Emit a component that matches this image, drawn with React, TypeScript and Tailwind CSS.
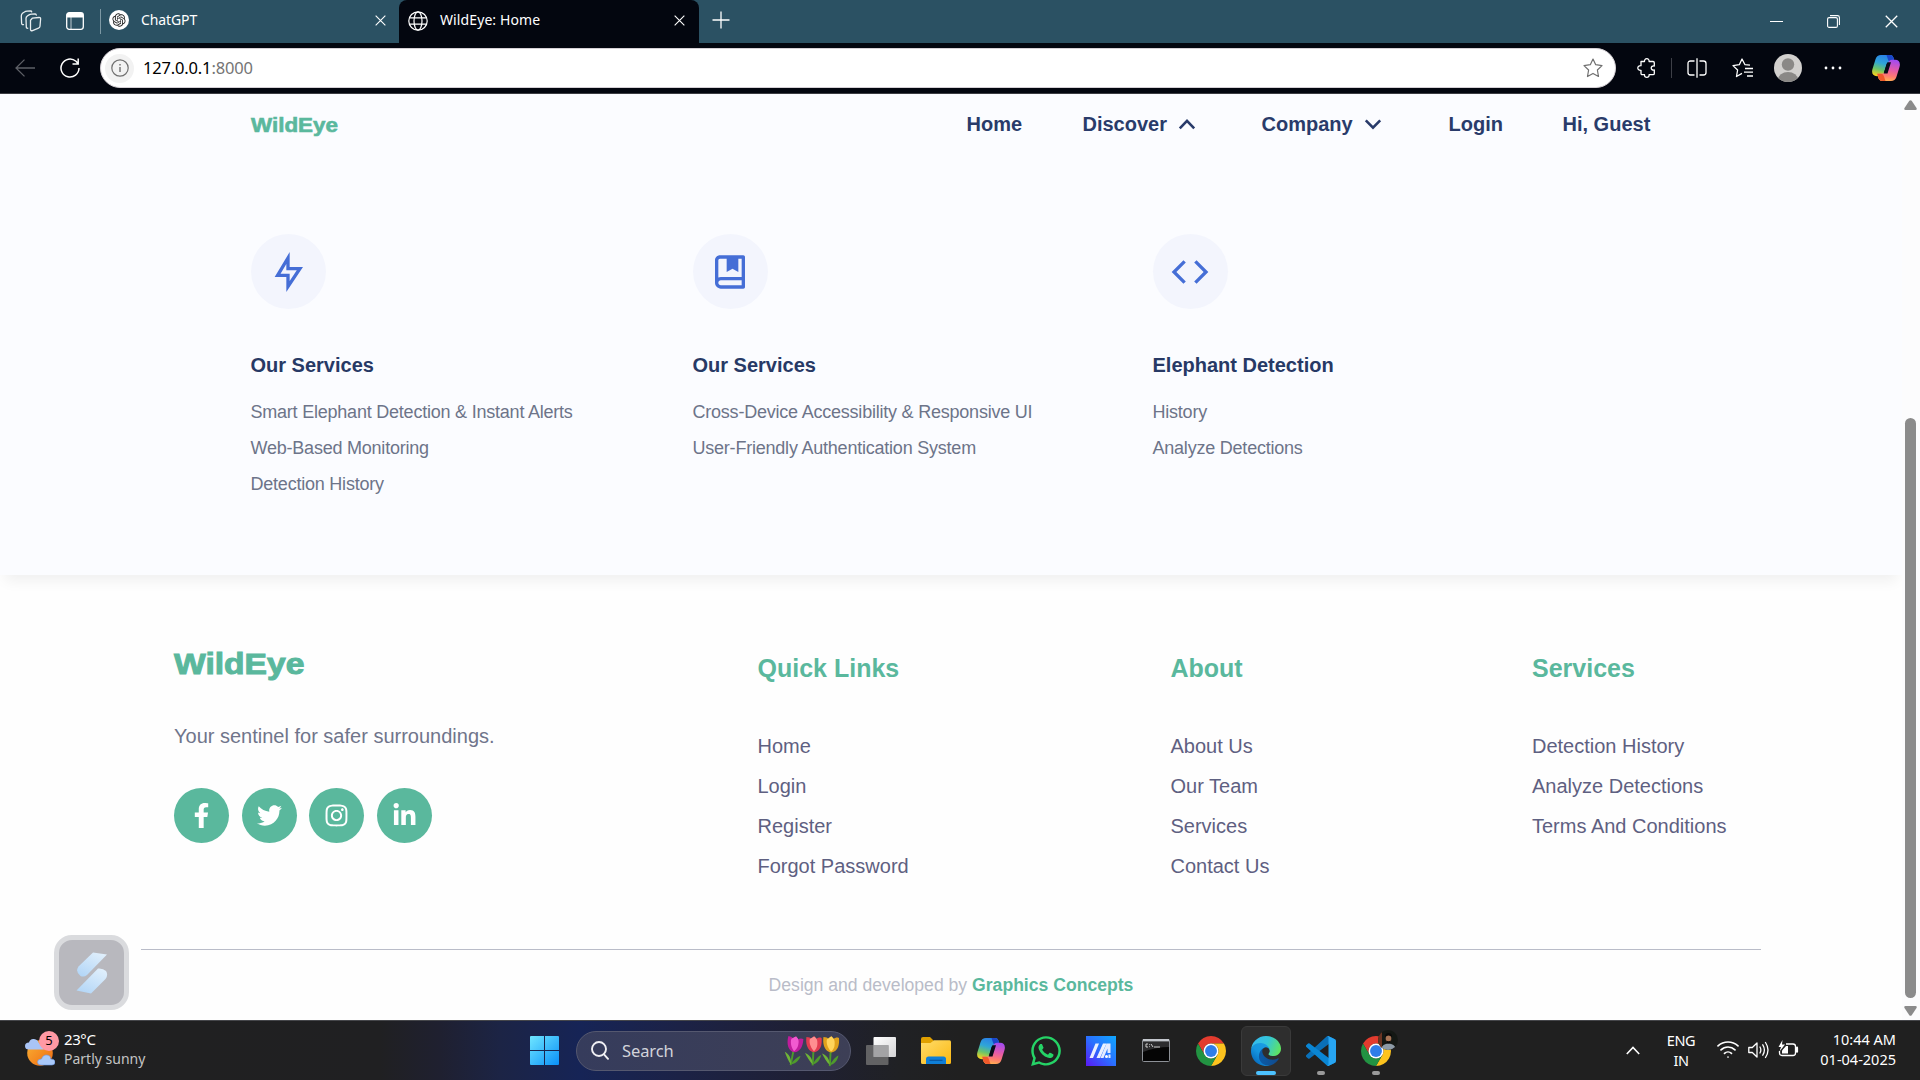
import React from "react";
import { RiFlashlightLine, RiCodeLine, RiOpenaiFill } from "react-icons/ri";
import { FaFacebookF, FaTwitter, FaInstagram, FaLinkedinIn, FaWhatsapp } from "react-icons/fa";
import { Wifi } from "lucide-react";

function BookMark({ size }: { size: number }) {
  return (
    <svg viewBox="0 0 24 24" width={size} height={size} fill="currentColor">
      <path d="M3 18.500V5C3 3.343 4.343 2 6 2H20C20.552 2 21 2.448 21 3V21C21 21.552 20.552 22 20 22H6.500C4.567 22 3 20.433 3 18.500ZM19 20V17H6.500C5.672 17 5 17.672 5 18.500C5 19.328 5.672 20 6.500 20H19ZM10 4H6C5.448 4 5 4.448 5 5V15.337C5.455 15.121 5.963 15 6.500 15H19V4H17V12L13.500 10L10 12V4Z" />
    </svg>
  );
}

function CopilotIcon({ id }: { id: string }) {
  const half =
    "M9 0H17.5C20 0 21 1.2 21.7 3.4L22.8 7.2H19C16 7.2 14.8 8.4 14 11L11.8 18C11 20.4 10 21.2 7.6 21.2H5C.8 21.2-.7 18 .5 14L3.6 4C4.5 1.2 6.2 0 9 0Z";
  return (
    <svg viewBox="0 0 28 26" className="h-[26px] w-[28px]">
      <defs>
        <linearGradient id={id + "a"} x1="0.6" y1="0" x2="0.3" y2="1">
          <stop offset="0" stopColor="#2a7fe8" />
          <stop offset="0.4" stopColor="#2fa5d8" />
          <stop offset="0.7" stopColor="#6ac46a" />
          <stop offset="1" stopColor="#f5d21f" />
        </linearGradient>
        <linearGradient id={id + "b"} x1="0.4" y1="1" x2="0.6" y2="0">
          <stop offset="0" stopColor="#a34bf0" />
          <stop offset="0.45" stopColor="#e55aa8" />
          <stop offset="0.75" stopColor="#ff7a70" />
          <stop offset="1" stopColor="#ffb152" />
        </linearGradient>
      </defs>
      <path d="M15 0h2.500C20 0 21 1.200 21.700 3.400L22.800 8H15Z" fill="#1b46c9" />
      <path d="M6 18h8l-2 8h-1.500C8 26 7 24.800 6.300 22.600Z" fill="#f0592b" />
      <path d={half} fill={`url(#${id}a)`} />
      <path d="M14.500 0H17.500C20 0 21 1.200 21.700 3.400L22.800 7.200H19C17.500 7.200 16.500 6 16 4.500Z" fill="#1b46c9" />
      <path d={half} fill={`url(#${id}b)`} transform="rotate(180 14 13)" />
      <path d="M13.500 26H10.500C8 26 7 24.800 6.300 22.600L5.200 18.800H9C10.500 18.800 11.500 20 12 21.500Z" fill="#f0592b" />
      <path d="M15.500 7.300h3.500L15.500 18.600h-3.700l2.200-7.400c.5-2 .8-3 1.500-3.900Z" fill="#0a0c18" />
    </svg>
  );
}

function ChromeIcon() {
  return (
    <svg viewBox="0 0 48 48" className="h-[30px] w-[30px]">
      <path d="M24 12H44.780A24 24 0 0 0 3.220 12L13.610 30A12 12 0 0 1 24 12Z" fill="#e33b2e" />
      <path d="M24 12H44.780A24 24 0 0 1 24 48L34.390 30A12 12 0 0 0 24 12Z" fill="#fcc31e" />
      <path d="M3.220 12A24 24 0 0 0 24 48L34.390 30A12 12 0 0 1 13.610 30Z" fill="#229342" />
      <circle cx="24" cy="24" r="12" fill="#fff" />
      <circle cx="24" cy="24" r="9.500" fill="#2f7de9" />
    </svg>
  );
}

function EdgeIcon() {
  return (
    <svg viewBox="0 0 256 256" className="h-[30px] w-[30px]">
      <defs>
        <linearGradient id="edgeA" x1="0.2" y1="0.5" x2="1" y2="0.5">
          <stop offset="0" stopColor="#0c59a4" />
          <stop offset="1" stopColor="#114a8b" />
        </linearGradient>
        <linearGradient id="edgeB" x1="0.9" y1="0.2" x2="0.3" y2="1">
          <stop offset="0" stopColor="#1b9de2" />
          <stop offset="0.5" stopColor="#1595df" />
          <stop offset="1" stopColor="#0669bd" />
        </linearGradient>
        <linearGradient id="edgeC" x1="0" y1="0.3" x2="1" y2="0.6">
          <stop offset="0" stopColor="#35b9f1" />
          <stop offset="0.5" stopColor="#34c6d8" />
          <stop offset="1" stopColor="#5fe45f" />
        </linearGradient>
      </defs>
      <path fill="url(#edgeA)" d="M231 190.500c-3.400 1.800-6.900 3.400-10.500 4.700a101.900 101.900 0 0 1-35.900 6.500c-47.300 0-88.500-32.500-88.500-74.300.1-11.400 6.400-21.900 16.400-27.300-42.800 1.800-53.800 46.400-53.800 72.500 0 73.900 68.100 81.400 82.800 81.400 7.900 0 19.800-2.300 27-4.600l1.300-.4a128.300 128.300 0 0 0 66.600-52.800 4 4 0 0 0-5.400-5.700z" />
      <path fill="url(#edgeB)" d="M105.700 241.400c-8.900-5.500-16.600-12.800-22.700-21.300-26.300-36-18.400-86.500 17.600-112.800 3.800-2.700 7.700-5.200 11.900-7.200 3.100-1.500 8.400-4.100 15.500-4a32.400 32.400 0 0 1 25.700 13c4 5.400 6.300 11.900 6.400 18.700 0-.2 24.500-79.600-80-79.600-43.900 0-80 41.700-80 78.200-.2 19.300 4 38.500 12.100 56a128 128 0 0 0 156.400 67.100c-21.100 6.300-43.800 3.500-62.900-8.100z" />
      <path fill="url(#edgeC)" d="M152.300 148.900c-.8 1.100-3.300 2.500-3.300 5.700 0 2.600 1.700 5.100 4.700 7.200 14.400 10 41.500 8.700 41.600 8.700 10.700 0 21.100-2.900 30.300-8.300A61.900 61.900 0 0 0 256 109.100c.3-22.400-8-37.300-11.300-43.900C223.400 23.300 177.700 0 128 0A128 128 0 0 0 0 126.200c.5-36.500 36.800-66 80-66 3.500 0 23.500.3 42 10.100 16.300 8.500 24.900 18.900 30.800 29.200 6.200 10.700 7.300 24.100 7.300 29.500 0 5.300-2.700 13.300-7.800 19.900z" />
    </svg>
  );
}

function VsCodeIcon() {
  return (
    <svg viewBox="0 0 100 100" className="h-[30px] w-[30px]">
      <path fill="#0a70b8" d="M96.460 10.800 75.860.88a6.230 6.230 0 0 0-7.100 1.200L1.300 63.600a4.170 4.170 0 0 0 0 6.160l5.510 5a4.170 4.170 0 0 0 5.320.24L93.360 13.400A4.130 4.130 0 0 1 100 16.700v-.24a6.250 6.250 0 0 0-3.540-5.630z" />
      <path fill="#0a86d4" d="M96.460 89.200 75.860 99.100a6.230 6.230 0 0 1-7.100-1.200L1.300 36.400a4.170 4.170 0 0 1 0-6.160l5.510-5a4.170 4.170 0 0 1 5.320-.24l81.230 61.600A4.130 4.130 0 0 0 100 83.300v.24a6.250 6.250 0 0 1-3.540 5.630z" />
      <path fill="#27a5f2" d="M75.860 99.100a6.230 6.230 0 0 1-7.100-1.200A3.670 3.670 0 0 0 75 95.300V4.700a3.670 3.670 0 0 0-6.250-2.600 6.230 6.230 0 0 1 7.100-1.200l20.600 9.900A6.250 6.250 0 0 1 100 16.400v67.200a6.250 6.250 0 0 1-3.540 5.630z" />
    </svg>
  );
}

function Tulip({ light, dark }: { light: string; dark: string }) {
  return (
    <g>
      <path d="M9 14C8.500 20 8.500 26 8 31" stroke="#4c9a2a" strokeWidth="2" fill="none" />
      <path d="M8 30C5 27 2 22 0 18C5 20 8 24 8 30Z" fill="#6fb536" />
      <path d="M8 30C10 26 14 21 17 20C16 25 13 29 8 30Z" fill="#4f9a2c" />
      <path d="M1.500 1C4 1 6 2 7 3L9.500 0L12 3C13.500 2 15 1 17.500 2C18 8 17 13 13.500 15.500C11 17.500 8 17.500 5.500 15.500C2.500 13 .5 8 1.500 1Z" fill={dark} />
      <path d="M5 3.500C7 2 8.500 1 9.500 0.500C12 2 13.500 4 13 9C13 12 11 15 9.500 16C7 14 4 8 5 3.500Z" fill={light} />
    </g>
  );
}

function Close({ className }: { className: string }) {
  return (
    <svg viewBox="0 0 12 12" className={className} fill="none" stroke="#fff" strokeWidth="1.2">
      <path d="M.7.7 11.300 11.300M11.300.7.7 11.300" />
    </svg>
  );
}

function TitleBar() {
  return (
    <div className="flex h-[43px] items-center bg-[#2b5163] font-['Noto_Sans',sans-serif] text-[14px] text-white">
      <svg viewBox="0 0 22 22" className="-mt-0.5 ml-5 h-[22px] w-[22px]" fill="none" stroke="#e8eef0" strokeWidth="1.300" strokeLinejoin="round" strokeLinecap="round">
        <path d="M10.500 10.200 12.300 8.200 19 7.500Q20.800 7.400 20.600 9L20 16.300Q19.900 17.700 18.500 18.200L12.500 20.600Q10.600 21.200 10.500 19.500Z" />
        <path d="M7.800 18.200Q6.400 18.600 6.300 17L6 8.500Q6 7 7.300 6L9 4.900Q10 4.200 11.500 4.100L15.200 4Q16.200 4 16.300 5" />
        <path d="M3.500 14.600Q1.800 15 1.600 13.200L1.300 6Q1.300 4.300 2.500 3.300L4.400 2Q5.500 1.200 7 1.100L10.500 1Q11.600 1 11.700 1.900" />
      </svg>
      <svg viewBox="0 0 18 18" className="-mt-0.5 ml-6 h-[18px] w-[18px]">
        <rect x=".7" y=".7" width="16.600" height="16.600" rx="2.500" fill="none" stroke="#fff" strokeWidth="1.300" />
        <path d="M.7 3Q.7.7 3 .7H15Q17.300.7 17.300 3V5.500H.7Z" fill="#fff" />
        <path d="M5 5v12" stroke="#fff" strokeWidth="1" strokeOpacity=".7" />
      </svg>
      <div className="ml-4 h-[25px] w-px bg-[#7d98a4]" />
      <div className="-mt-1 ml-2 grid h-5 w-5 place-items-center rounded-full bg-white text-[#222]">
        <RiOpenaiFill size={16} />
      </div>
      <div className="-mt-1 ml-3 w-[234px] tracking-[-0.1px]">ChatGPT</div>
      <Close className="-mt-0.5 h-[11px] w-[11px]" />
      <div className="ml-[13px] flex h-[43px] w-[300px] items-center rounded-t-lg bg-[#03060f]">
        <svg viewBox="0 0 20 20" className="-mt-0.5 ml-[9px] h-5 w-5" fill="none" stroke="#fff" strokeWidth="1.200">
          <circle cx="10" cy="10" r="9.200" />
          <ellipse cx="10" cy="10" rx="4" ry="9.200" />
          <path d="M1.500 6.800h17M1.500 13.200h17" />
        </svg>
        <div className="-mt-1 ml-3 w-[234px] tracking-[0.1px]">WildEye: Home</div>
        <Close className="-mt-0.5 h-[11px] w-[11px]" />
      </div>
      <svg viewBox="0 0 18 18" className="-mt-1 ml-[13px] h-[18px] w-[18px]" fill="none" stroke="#fff" strokeWidth="1.300">
        <path d="M9 .5v17M.5 9h17" />
      </svg>
      <div className="mr-[22px] ml-auto flex items-center">
        <div className="mr-[44px] h-px w-[13px] bg-white" />
        <svg viewBox="0 0 13 13" className="mr-[45px] h-[13px] w-[13px]" fill="none" stroke="#fff" strokeWidth="1.100">
          <rect x=".6" y="2.600" width="9.800" height="9.800" rx="1.500" />
          <path d="M3 .6h7.500q1.900 0 1.900 1.900V10" />
        </svg>
        <Close className="h-[13px] w-[13px]" />
      </div>
    </div>
  );
}

function Toolbar() {
  return (
    <div className="flex h-[51px] items-center border-b border-[#3b3c42] bg-[#03060f]">
      <svg viewBox="0 0 20 18" className="ml-[15px] h-[18px] w-5" fill="none" stroke="#5e6067" strokeWidth="1.300">
        <path d="M20 9H1M9.500.6 1 9l8.500 8.400" />
      </svg>
      <svg viewBox="0 0 20 20" className="ml-[25px] h-5 w-5" fill="none" stroke="#fff" strokeWidth="1.500">
        <path d="M19 10A9 9 0 1 1 16 3.300L18 5.500M18.200.5V6H12.500" />
      </svg>
      <div className="ml-5 flex h-10 w-[1516px] items-center rounded-full border border-[#d5d0d5] bg-white">
        <div className="ml-1 grid h-[29px] w-[29px] place-items-center rounded-full bg-[#f2f2f2]">
          <svg viewBox="0 0 18 18" className="h-[18px] w-[18px]" fill="none" stroke="#707070" strokeWidth="1.200">
            <circle cx="9" cy="9" r="8.200" />
            <path d="M9 8v5M9 5v1.500" strokeWidth="1.400" />
          </svg>
        </div>
        <div className="ml-[9px] font-['Noto_Sans',sans-serif] text-[16.5px] tracking-[-0.17px] text-black">
          127.0.0.1<span className="text-[#757575]">:8000</span>
        </div>
        <svg viewBox="0 0 20 20" className="mr-3 ml-auto h-5 w-5" fill="none" stroke="#707070" strokeWidth="1.200" strokeLinejoin="round">
          <path d="M10 1 12.700 6.700 19 7.600 14.400 12 15.500 18.500 10 15.400 4.500 18.500 5.600 12 1 7.600 7.300 6.700Z" />
        </svg>
      </div>
      <svg viewBox="0 0 20 20" className="ml-[21px] h-5 w-5" fill="none" stroke="#fff" strokeWidth="1.300" strokeLinejoin="round">
        <path d="M4 3.500H7.500C7.300 1.500 8.500.7 9.800.7S12.300 1.500 12.100 3.500H16Q17.300 3.500 17.300 4.800V8C15.300 7.700 14.200 8.700 14.200 10S15.300 12.300 17.300 12V15.500Q17.300 16.700 16 16.700H12.100C12.300 18.600 11.100 19.300 9.800 19.300S7.300 18.600 7.500 16.700H5.500Q4 16.700 4 15.500V12.300C2 12.500.8 11.400.8 10S2 7.500 4 7.700Z" />
      </svg>
      <div className="ml-3.5 h-5 w-px bg-[#3d3f47]" />
      <svg viewBox="0 0 20 20" className="ml-[15px] h-5 w-5" fill="none" stroke="#fff" strokeWidth="1.300">
        <path d="M10 .3v19.400M7.500 3H3.500Q1 3 1 5.500v9Q1 17 3.500 17h4M12.500 3h4Q19 3 19 5.500v9Q19 17 16.500 17h-4" />
      </svg>
      <svg viewBox="0 0 21 20" className="ml-[25px] h-5 w-[21px]" fill="none" stroke="#fff" strokeWidth="1.300" strokeLinejoin="round">
        <path d="M18 7.200 13 6.700 10 1 7.300 6.700 1 7.600 5.600 12 4.500 18.500 10 15.400M13 10.500h8M12 14.200h9M15 18h6" />
      </svg>
      <svg viewBox="0 0 28 28" className="ml-[21px] h-7 w-7">
        <defs>
          <clipPath id="profileClip"><circle cx="14" cy="14" r="14" /></clipPath>
        </defs>
        <g clipPath="url(#profileClip)">
          <rect width="28" height="28" fill="#d2d0ce" />
          <circle cx="14" cy="10.500" r="6.200" fill="#8a8886" />
          <ellipse cx="14" cy="25.500" rx="10" ry="7.500" fill="#8a8886" />
        </g>
      </svg>
      <svg viewBox="0 0 18 4" className="ml-[22px] h-1 w-[18px]" fill="#fff">
        <circle cx="2" cy="2" r="1.400" />
        <circle cx="9" cy="2" r="1.400" />
        <circle cx="16" cy="2" r="1.400" />
      </svg>
      <div className="ml-[30px]"><CopilotIcon id="cpA" /></div>
    </div>
  );
}

function Chevron({ up }: { up?: boolean }) {
  return (
    <svg viewBox="0 0 32 32" className="ml-1 h-8 w-8" fill="none" stroke="#293b6a" strokeWidth="2.600">
      <path d={up ? "M8.8 20.3 16 12.900 23.200 20.300" : "M8.800 12.300 16 19.700 23.200 12.300"} />
    </svg>
  );
}

const services = [
  { title: "Our Services", Icon: RiFlashlightLine, items: ["Smart Elephant Detection & Instant Alerts", "Web-Based Monitoring", "Detection History"] },
  { title: "Our Services", Icon: BookMark, items: ["Cross-Device Accessibility & Responsive UI", "User-Friendly Authentication System"] },
  { title: "Elephant Detection", Icon: RiCodeLine, items: ["History", "Analyze Detections"] },
];

const footerColumns = [
  { title: "Quick Links", items: ["Home", "Login", "Register", "Forgot Password"] },
  { title: "About", items: ["About Us", "Our Team", "Services", "Contact Us"] },
  { title: "Services", items: ["Detection History", "Analyze Detections", "Terms And Conditions"] },
];

const socials = [
  { Icon: FaFacebookF, size: 25 },
  { Icon: FaTwitter, size: 25 },
  { Icon: FaInstagram, size: 25 },
  { Icon: FaLinkedinIn, size: 25 },
];

function Header() {
  return (
    <header className="relative h-[481px] bg-[#fbfcff] pl-[250.5px] shadow-[0_11px_13px_-5px_rgba(0,0,0,0.06)]">
      <nav className="flex h-[60px] items-center text-[20px] font-bold text-[#293b6a]">
        <div className="mt-0.5 w-[716px]">
          <span className="inline-block origin-left scale-x-[1.12] text-[#5ab89d] [-webkit-text-stroke:0.6px_#5ab89d]">WildEye</span>
        </div>
        <div className="w-[116px]">Home</div>
        <div className="flex w-[179px] items-center">Discover<Chevron up /></div>
        <div className="flex w-[187px] items-center">Company<Chevron /></div>
        <div className="w-[114px]">Login</div>
        <div>Hi, Guest</div>
      </nav>
      <div className="grid grid-cols-[442px_460px_1fr] pt-20">
        {services.map(({ title, Icon, items }, i) => (
          <div key={i}>
            <div className="grid h-[75px] w-[75px] place-items-center rounded-full bg-[#f3f5fd] text-[#456ed6]">
              <Icon size={40} />
            </div>
            <h3 className="mt-[41px] text-[20px] leading-[30px] font-bold text-[#273965]">{title}</h3>
            <ul className="mt-3.5 text-[18px] leading-9 tracking-[-0.22px] text-[#6d7489]">
              {items.map((t) => <li key={t}>{t}</li>)}
            </ul>
          </div>
        ))}
      </div>
    </header>
  );
}

function Footer() {
  return (
    <footer className="flex flex-1 flex-col">
      <div className="grid h-[374px] grid-cols-[583.5px_413px_361.5px_1fr] pl-[174px]">
        <div className="pt-[69px]">
          <div className="w-max origin-left scale-x-[1.12] text-[30px] leading-10 font-bold text-[#5ab89d] [-webkit-text-stroke:1px_#5ab89d]">WildEye</div>
          <p className="mt-[37px] text-[20px] leading-[30px] text-[#70758b]">Your sentinel for safer surroundings.</p>
          <div className="mt-[37px] flex gap-[12.7px]">
            {socials.map(({ Icon, size }, i) => (
              <div key={i} className="grid h-[55px] w-[55px] place-items-center rounded-full bg-[#5ab89d] text-white">
                <Icon size={size} />
              </div>
            ))}
          </div>
        </div>
        {footerColumns.map((c) => (
          <div key={c.title} className="pt-[73px]">
            <h4 className="text-[25px] leading-10 font-bold text-[#5ab89d]">{c.title}</h4>
            <ul className="mt-[38px] text-[20px] leading-10 text-[#5e6081]">
              {c.items.map((t) => <li key={t}>{t}</li>)}
            </ul>
          </div>
        ))}
      </div>
      <div className="mr-[141px] ml-[141px] border-t border-[#b9bcc8] pt-5 text-center text-[17.6px] leading-[30px] text-[#b9bcc8]">
        Design and developed by <span className="font-bold text-[#5ab89d]">Graphics Concepts</span>
      </div>
    </footer>
  );
}

function FloatingWidget() {
  return (
    <div className="absolute top-[841px] left-[54px] grid h-[75px] w-[75px] place-items-center rounded-[18px] border-[5px] border-[#dadbde] bg-[#b8b8be]">
      <svg viewBox="0 0 32 42" className="h-[42px] w-8">
        <defs>
          <linearGradient id="swA" x1="0.8" y1="0" x2="0.2" y2="1">
            <stop offset="0" stopColor="#e0effc" />
            <stop offset="1" stopColor="#b3d6f7" />
          </linearGradient>
        </defs>
        <path d="M17 .5 31 2.500 11 23Q8 25.500 4.500 24Q-1 20 2.500 14.500Z" fill="url(#swA)" />
        <path d="M.5 38.500 22 16.500Q27 16 30 19Q32.500 23 29.500 27L15 41.500Z" fill="url(#swA)" />
      </svg>
    </div>
  );
}

function Scrollbar() {
  return (
    <div className="flex w-[18px] flex-col items-center bg-[#fcfcfd] pt-1.5 pr-0.5">
      <svg viewBox="0 0 13 10" className="h-2.5 w-[13px]" fill="#8b8b8b"><path d="M5.300.8Q6.500-.5 7.700.8L12.500 8Q13.300 9.800 11.500 9.900H1.500Q-.3 9.800.5 8Z" /></svg>
      <div className="mt-[308px] h-[580px] w-[11px] rounded-full bg-[#8b8b8b]" />
      <svg viewBox="0 0 13 10" className="mt-2 h-2.5 w-[13px]" fill="#8b8b8b"><path d="M5.300 9.200Q6.500 10.500 7.700 9.200L12.500 2Q13.300.2 11.500.1H1.500Q-.3.2.5 2Z" /></svg>
    </div>
  );
}

function AppCell({ children, indicator, active }: { children?: React.ReactNode; indicator?: boolean; active?: boolean }) {
  return (
    <div className={active ? "relative grid h-[50px] w-[50px] place-items-center rounded-md border border-[#3a3a3a] bg-[#2e2e2e]" : "relative grid h-[50px] w-[50px] place-items-center"}>
      {children}
      {active && <div className="absolute bottom-0 left-[14px] h-1 w-5 rounded-full bg-[#4cc2ff]" />}
      {indicator && <div className="absolute bottom-px left-[21px] h-1 w-2 rounded-full bg-[#9a9a9a]" />}
    </div>
  );
}

function Taskbar() {
  return (
    <div className="flex h-[60px] items-center border-t border-[#45464a] bg-[linear-gradient(90deg,#202020_0px,#202022_380px,#1f2030_440px,#1c2445_500px,#162456_580px,#1c2246_680px,#1f2034_800px,#202124_900px,#202020_960px)] font-['Noto_Sans',sans-serif] text-[15px] leading-5 text-white">
      <div className="-mt-1 ml-[25px] h-[36px] w-[30px]">
        <div className="relative">
          <svg viewBox="0 0 30 36" className="h-9 w-[30px]">
            <defs>
              <linearGradient id="sun" x1="0" y1="0" x2="1" y2="1">
                <stop offset="0" stopColor="#f9b234" />
                <stop offset="1" stopColor="#f06a12" />
              </linearGradient>
            </defs>
            <circle cx="15" cy="22" r="12.800" fill="url(#sun)" />
            <path d="M4 18.500Q0 18.500 0 15T4 11.500Q5 7.500 9 8T13.500 11.500L19 18.500Z" fill="#a9c4f5" />
            <path d="M16 34Q12.500 34 12.500 31T16.500 28Q18 23.500 22 24T25.500 28Q30 28 30 31T27 34Z" fill="#a9c9fa" stroke="#6d97e0" strokeWidth=".6" />
          </svg>
          <div className="absolute top-0 left-[14px] grid h-5 w-5 place-items-center rounded-full bg-[#ff99a4] text-[13px] leading-none text-black">5</div>
        </div>
      </div>
      <div className="-mt-1 ml-[9px] w-[466px]">
        <div className="tracking-[-0.4px]">23°C</div>
        <div className="text-[14px] text-[#c4c4c4]">Partly sunny</div>
      </div>
      <svg viewBox="0 0 29 29" className="h-[29px] w-[29px]">
        <defs>
          <linearGradient id="win" x1="0" y1="0" x2="1" y2="1">
            <stop offset="0" stopColor="#6fe6ff" />
            <stop offset="1" stopColor="#0a90f8" />
          </linearGradient>
        </defs>
        <path fill="url(#win)" d="M1 0H14V14H0V1Q0 0 1 0ZM15 0H28Q29 0 29 1V14H15ZM0 15H14V29H1Q0 29 0 28ZM15 15H29V28Q29 29 28 29H15Z" />
      </svg>
      <div className="ml-[17px] flex h-10 w-[275px] items-center rounded-full border border-[#55586f] bg-[linear-gradient(90deg,#363c5c,#3d3f56)]">
        <svg viewBox="0 0 18 19" className="ml-3.5 h-[19px] w-[18px]" fill="none" stroke="#f0f0f4" strokeWidth="1.900" strokeLinecap="round">
          <circle cx="8" cy="8" r="7" />
          <path d="m13 13.300 4 4.500" />
        </svg>
        <div className="ml-[13px] text-[16.5px] tracking-[-0.1px] text-[#d2d3da]">Search</div>
        <svg viewBox="0 0 60 32" className="mr-2 ml-auto h-8 w-[60px]">
          <g transform="translate(3 1) rotate(8 9 15) scale(.95)"><Tulip light="#f25ad0" dark="#c01c9c" /></g>
          <g transform="translate(23 1) scale(.95)"><Tulip light="#ff8f90" dark="#e23c50" /></g>
          <g transform="translate(40 1) scale(.97)"><Tulip light="#ffd45a" dark="#e0a11c" /></g>
        </svg>
      </div>
      <div className="ml-[5px] flex gap-[5px]">
        <AppCell>
          <svg viewBox="0 0 30 28" className="h-7 w-[30px]">
            <defs>
              <linearGradient id="tv" x1="0" y1="0" x2="1" y2="1"><stop offset="0" stopColor="#fff" /><stop offset="1" stopColor="#d4d4d6" /></linearGradient>
            </defs>
            <rect x="7.500" y="0" width="22.500" height="20" rx="1" fill="url(#tv)" />
            <rect x="0" y="8" width="22.500" height="20" rx="1" fill="#737373" fillOpacity=".8" />
            <rect x="7.500" y="8" width="15" height="12" fill="#a3a3a5" />
          </svg>
        </AppCell>
        <AppCell>
          <svg viewBox="0 0 30 27" className="h-[27px] w-[30px]">
            <defs>
              <linearGradient id="fold" x1="0" y1="0" x2="1" y2="1"><stop offset="0" stopColor="#ffdc6a" /><stop offset="1" stopColor="#fbb812" /></linearGradient>
            </defs>
            <path d="M0 2Q0 0 2 0H9L12.500 3.500V8H0Z" fill="#e0a000" />
            <path d="M0 6H9.500L13 3.300H28.500Q30 3.300 30 5V25.500Q30 27 28.500 27H1.500Q0 27 0 25.500Z" fill="url(#fold)" />
            <path d="M5 27V22Q5 19.500 7.500 19.500H22.500Q25 19.500 25 22V27Z" fill="#0f7fd8" />
            <path d="M8.500 23.300h13" stroke="#0a55a0" strokeWidth="1.200" />
          </svg>
        </AppCell>
        <AppCell><CopilotIcon id="cpB" /></AppCell>
        <AppCell><FaWhatsapp size={34} color="#25d366" /></AppCell>
        <AppCell>
          <svg viewBox="0 0 30 30" className="h-[30px] w-[30px]">
            <defs>
              <linearGradient id="ma" x1="0" y1="1" x2="1" y2="0"><stop offset="0" stopColor="#5a18f5" /><stop offset=".5" stopColor="#2a70ff" /><stop offset="1" stopColor="#0fa8ff" /></linearGradient>
            </defs>
            <rect width="30" height="30" fill="url(#ma)" />
            <path d="M9.500 7.500H13L7 22H3.500ZM17 7.500H20.500L14 22H10.500Z" fill="#fff" fillOpacity=".9" />
            <path d="M20.500 7.500H24.500V17H21.500V12.500L17.500 22H14.500Z" fill="#e4ecff" />
            <circle cx="20.500" cy="20.500" r="1.500" fill="#fff" />
            <path d="M22.500 18.500H24.500V22H22.500Z" fill="#e4ecff" />
          </svg>
        </AppCell>
        <AppCell>
          <svg viewBox="0 0 28 23" className="h-[23px] w-7">
            <rect x=".5" y=".5" width="27" height="22" rx="1" fill="#050505" stroke="#8d9197" />
            <rect x="1" y="0" width="26" height="2.500" fill="#c3c7cd" />
            <path d="M1 3H27V8Q14 8 1 13Z" fill="#2c2c2e" />
            <path d="M6 5H4V8H6M7.500 5.300v.8M7.500 7.300v.8M9 5l2 3M12 8h6" stroke="#ddd" strokeWidth=".9" fill="none" />
          </svg>
        </AppCell>
        <AppCell><ChromeIcon /></AppCell>
        <AppCell active><EdgeIcon /></AppCell>
        <AppCell indicator><VsCodeIcon /></AppCell>
        <AppCell indicator>
          <ChromeIcon />
          <svg viewBox="0 0 20 20" className="absolute top-1 left-[27px] h-5 w-5">
            <defs><clipPath id="chromeAv"><circle cx="10" cy="10" r="10" /></clipPath></defs>
            <g clipPath="url(#chromeAv)">
              <rect width="20" height="20" fill="#141814" />
              <rect width="4" height="20" fill="#6a3422" />
              <ellipse cx="10.500" cy="19" rx="7" ry="5.500" fill="#8d9aa6" />
              <ellipse cx="10.500" cy="8.500" rx="2.800" ry="4" fill="#a87455" />
              <path d="M7 7Q7 3 10.500 3T14 7Q12 5.500 10.500 5.500T7 7ZM8 10.500Q10.500 12 13 10.500Q12.500 13.500 10.500 13.500T8 10.500Z" fill="#0a0a0a" />
            </g>
          </svg>
        </AppCell>
      </div>
      <div className="mr-[24px] ml-auto flex items-center">
        <svg viewBox="0 0 14 9" className="h-[9px] w-3.5" fill="none" stroke="#fff" strokeWidth="1.600"><path d="M.8 8 7 1.500 13.200 8" /></svg>
        <div className="-mt-0.5 ml-6 w-[34px] text-center text-[14.5px] tracking-[-0.4px]">ENG<br />IN</div>
        <Wifi className="-mt-1 ml-[18px]" size={24} strokeWidth={1.7} />
        <svg viewBox="0 0 21 18" className="-mt-0.5 ml-2 h-[18px] w-[21px]" fill="none" stroke="#fff" strokeWidth="1.300" strokeLinecap="round" strokeLinejoin="round">
          <path d="M.8 6.500V11.500H4.300L9 16V2L4.300 6.500ZM12 6Q13.700 9 12 12M14.800 3.800Q18 9 14.800 14.200M17.500 1.500Q22.500 9 17.500 16.500" />
        </svg>
        <svg viewBox="0 0 21 18" className="-mt-1 ml-[9px] h-[18px] w-[21px]" fill="none" stroke="#fff" strokeWidth="1.300">
          <path d="M8 4H15Q17.500 4 17.500 6.500V13Q17.500 15.500 15 15.500H4Q1.500 15.500 1.500 13V11" />
          <path d="M19 7.700v4" strokeWidth="2.200" strokeLinecap="round" />
          <path d="M4 13.500V10.500L8 6H10V13.500Z" fill="#fff" stroke="none" />
          <path d="M4.500 0 .5 7H3L1.500 11.500 7 4.500H4Z" fill="#fff" stroke="none" />
        </svg>
        <div className="-mt-1 w-[97px] text-right text-[14.5px] whitespace-nowrap">10:44 AM<br />01-04-2025</div>
      </div>
    </div>
  );
}

export default function App() {
  return (
    <div className="flex h-[1080px] w-[1920px] flex-col overflow-hidden bg-white font-['Liberation_Sans',Arial,sans-serif]">
      <TitleBar />
      <Toolbar />
      <div className="flex h-[926px]">
        <main className="relative flex w-[1902px] flex-col overflow-hidden bg-[#fefefe]">
          <Header />
          <Footer />
          <FloatingWidget />
        </main>
        <Scrollbar />
      </div>
      <Taskbar />
    </div>
  );
}
